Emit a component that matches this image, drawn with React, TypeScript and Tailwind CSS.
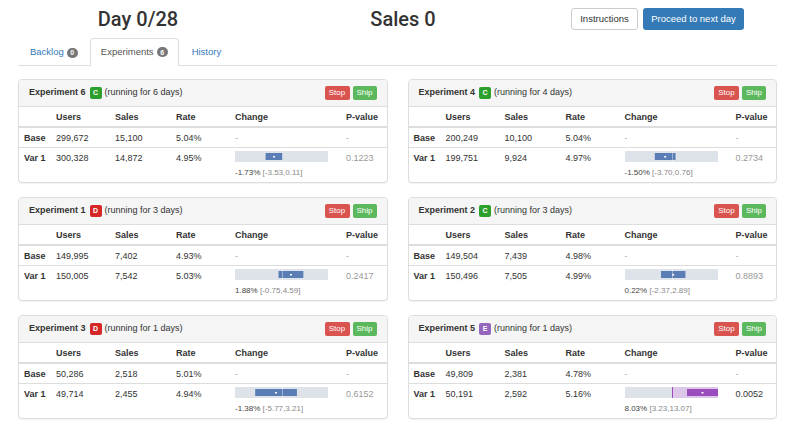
import React from "react"

type Exp = {
  name: string
  grade: "C" | "D" | "E"
  days: number
  base: [string, string, string]
  v: [string, string, string]
  change: string
  lo: number
  hi: number
  p: string
  sig?: boolean
}

const exps: Exp[] = [
  { name: "Experiment 6", grade: "C", days: 6, base: ["299,672", "15,100", "5.04%"], v: ["300,328", "14,872", "4.95%"], change: "-1.73%", lo: -3.53, hi: 0.11, p: "0.1223" },
  { name: "Experiment 4", grade: "C", days: 4, base: ["200,249", "10,100", "5.04%"], v: ["199,751", "9,924", "4.97%"], change: "-1.50%", lo: -3.7, hi: 0.76, p: "0.2734" },
  { name: "Experiment 1", grade: "D", days: 3, base: ["149,995", "7,402", "4.93%"], v: ["150,005", "7,542", "5.03%"], change: "1.88%", lo: -0.75, hi: 4.59, p: "0.2417" },
  { name: "Experiment 2", grade: "C", days: 3, base: ["149,504", "7,439", "4.98%"], v: ["150,496", "7,505", "4.99%"], change: "0.22%", lo: -2.37, hi: 2.89, p: "0.8893" },
  { name: "Experiment 3", grade: "D", days: 1, base: ["50,286", "2,518", "5.01%"], v: ["49,714", "2,455", "4.94%"], change: "-1.38%", lo: -5.77, hi: 3.21, p: "0.6152" },
  { name: "Experiment 5", grade: "E", days: 1, base: ["49,809", "2,381", "4.78%"], v: ["50,191", "2,592", "5.16%"], change: "8.03%", lo: 3.23, hi: 13.07, p: "0.0052", sig: true },
]

const gradeColor = {
  C: "bg-[#2ca02c]",
  D: "bg-[#d62728]",
  E: "bg-[#9467bd]",
}

const fmt = (n: number) => n.toFixed(2)

// little confidence-interval chart, scale is +/-10% around zero
function ChangeBar({ lo, hi, sig }: { lo: number; hi: number; sig?: boolean }) {
  const sx = (v: number) => 47 + Math.max(-10, Math.min(10, v)) * 4.65
  const a = Math.max(0, sx(lo))
  const b = Math.min(93, sx(hi))
  const fill = sig ? "#9a4bbd" : "#5a7db5"
  return (
    <svg width="93" height="11" className="block">
      <rect width="93" height="11" fill="#dee3ea" />
      {sig && <rect x="47" width="46" height="11" fill="#dcc7e9" />}
      <rect x={a} y="2" width={b - a} height="7" fill={fill} />
      <rect x="47" width="1" height="11" fill={sig ? "#9a4bbd" : "#ffffff"} opacity={sig ? 1 : 0.4} />
      <rect x={(a + b) / 2 - 1} y="5" width="2" height="1.5" fill="#ffffff" />
    </svg>
  )
}

function Panel({ e }: { e: Exp }) {
  return (
    <div className="border border-[#dddddd] rounded-[4px] bg-white shadow-[0_1px_1px_rgba(0,0,0,0.05)] overflow-hidden">
      <div className="flex items-center h-[27px] px-[10px] bg-[#f5f5f5] border-b border-[#dddddd]">
        <span className="font-bold text-[9px]">{e.name}</span>
        <span className={`ml-[4px] w-[12px] h-[12px] rounded-[2px] ${gradeColor[e.grade]} text-white text-[7px] font-bold flex items-center justify-center`}>
          {e.grade}
        </span>
        <span className="ml-[3px] text-[9px]">(running for {e.days} days)</span>
        <div className="ml-auto flex gap-[3px]">
          <button className="h-[14px] w-[25px] rounded-[2px] bg-[#d9534f] text-white text-[8px] leading-none">Stop</button>
          <button className="h-[14px] w-[24px] rounded-[2px] bg-[#5cb85c] text-white text-[8px] leading-none">Ship</button>
        </div>
      </div>
      <table className="w-full table-fixed border-collapse text-[9px] leading-[10px]">
        <colgroup>
          <col className="w-[32px]" />
          <col className="w-[59px]" />
          <col className="w-[61px]" />
          <col className="w-[59px]" />
          <col className="w-[111px]" />
          <col />
        </colgroup>
        <thead>
          <tr className="border-b-2 border-[#dddddd]">
            <th className="pl-[5px] pt-[5px] pb-[4px]"></th>
            <th className="pl-[5px] pt-[5px] pb-[4px] text-left font-bold">Users</th>
            <th className="pl-[5px] pt-[5px] pb-[4px] text-left font-bold">Sales</th>
            <th className="pl-[5px] pt-[5px] pb-[4px] text-left font-bold">Rate</th>
            <th className="pl-[5px] pt-[5px] pb-[4px] text-left font-bold">Change</th>
            <th className="pl-[5px] pt-[5px] pb-[4px] text-left font-bold">P-value</th>
          </tr>
        </thead>
        <tbody>
          <tr className="border-b border-[#dddddd]">
            <td className="pl-[5px] pt-[5px] pb-[4px] font-bold">Base</td>
            {e.base.map((c, i) => (
              <td key={i} className="pl-[5px] pt-[5px] pb-[4px]">{c}</td>
            ))}
            <td className="pl-[5px] pt-[5px] pb-[4px] text-[#aaaaaa]">-</td>
            <td className="pl-[5px] pt-[5px] pb-[4px] text-[#aaaaaa]">-</td>
          </tr>
          <tr>
            <td className="pl-[5px] pt-[5px] pb-[4px] align-top font-bold">Var 1</td>
            {e.v.map((c, i) => (
              <td key={i} className="pl-[5px] pt-[5px] pb-[4px] align-top">{c}</td>
            ))}
            <td className="pl-[5px] pt-[3px] pb-[4px] align-top">
              <ChangeBar lo={e.lo} hi={e.hi} sig={e.sig} />
              <div className="mt-[6px] text-[8px] leading-[10px]">
                <span className="text-[#444444]">{e.change}</span>{" "}
                <span className="text-[#888888]">[{fmt(e.lo)},{fmt(e.hi)}]</span>
              </div>
            </td>
            <td className={`pl-[5px] pt-[5px] pb-[4px] align-top ${e.sig ? "text-[#333333]" : "text-[#999999]"}`}>{e.p}</td>
          </tr>
        </tbody>
      </table>
    </div>
  )
}

function Badge({ n }: { n: number }) {
  return (
    <span className="ml-[3px] inline-flex items-center justify-center h-[10px] min-w-[11px] px-[3px] rounded-full bg-[#777777] text-white text-[7px] font-bold leading-none">
      {n}
    </span>
  )
}

export default function App() {
  return (
    <div className="w-[800px] h-[437px] overflow-hidden bg-white text-[#333333] font-['Liberation_Sans',Arial,sans-serif]">
      <div className="ml-[18px] w-[759px]">
        <div className="flex items-center h-[38px]">
          <div className="w-[240px] text-center text-[20px] font-medium font-['Roboto','Liberation_Sans',sans-serif]">Day 0/28</div>
          <div className="w-[290px] text-center text-[20px] font-medium font-['Roboto','Liberation_Sans',sans-serif]">Sales 0</div>
          <div className="flex-1 flex justify-end gap-[5px] pr-[33px]">
            <button className="h-[22px] w-[67px] rounded-[3px] border border-[#cccccc] bg-white text-[9.5px] text-[#333333]">Instructions</button>
            <button className="h-[22px] w-[101px] rounded-[3px] bg-[#337ab7] text-[9.5px] text-white">Proceed to next day</button>
          </div>
        </div>
        <div className="flex items-end h-[28px] border-b border-[#dddddd] text-[9.5px] pl-[2px] gap-[2px]">
          <div className="flex items-center h-[27px] px-[10px] text-[#337ab7] -mb-px">
            Backlog<Badge n={0} />
          </div>
          <div className="flex items-center h-[28px] px-[10px] text-[#555555] bg-white border border-[#dddddd] border-b-white rounded-t-[4px] -mb-px">
            Experiments<Badge n={6} />
          </div>
          <div className="flex items-center h-[27px] px-[11px] text-[#337ab7] -mb-px">History</div>
        </div>
        <div className="grid grid-cols-2 gap-x-[20px] gap-y-[14px] mt-[13px]">
          {exps.map((e) => (
            <Panel key={e.name} e={e} />
          ))}
        </div>
      </div>
    </div>
  )
}
